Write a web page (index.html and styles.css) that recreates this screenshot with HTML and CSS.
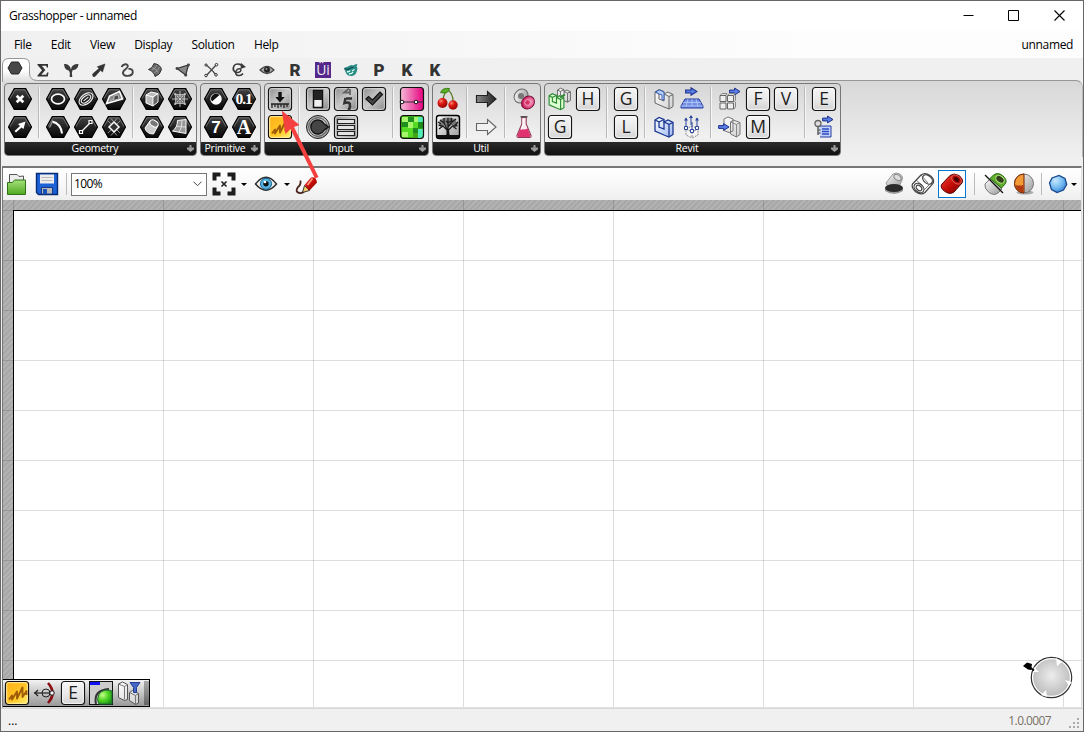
FILE: index.html
```html
<!DOCTYPE html>
<html lang="en">
<head>
<meta charset="utf-8">
<title>Grasshopper - unnamed</title>
<link rel="stylesheet" href="styles.css">
</head>
<body>
<svg class="defs" width="0" height="0">
  <defs>
    <linearGradient id="gDark" x1="0" y1="0" x2="0" y2="1"><stop offset="0" stop-color="#444"/><stop offset=".5" stop-color="#222"/><stop offset="1" stop-color="#080808"/></linearGradient>
    <linearGradient id="gKey" x1="0" y1="0" x2="0" y2="1"><stop offset="0" stop-color="#f6f6f6"/><stop offset=".6" stop-color="#e6e6e6"/><stop offset="1" stop-color="#d2d2d2"/></linearGradient>
    <linearGradient id="gGrey" x1="0" y1="0" x2="1" y2="1"><stop offset="0" stop-color="#8b8b8b"/><stop offset=".5" stop-color="#c9c9c9"/><stop offset="1" stop-color="#858585"/></linearGradient>
    <linearGradient id="gPink" x1="0" y1="0" x2="1" y2="0"><stop offset="0" stop-color="#f5bcd8"/><stop offset="1" stop-color="#e6007e"/></linearGradient>
    <linearGradient id="gYellow" x1="0" y1="0" x2="1" y2="1"><stop offset="0" stop-color="#ffad16"/><stop offset=".6" stop-color="#ffc928"/><stop offset="1" stop-color="#fff37a"/></linearGradient>
    <linearGradient id="gArrow" x1="0" y1="0" x2="1" y2="0"><stop offset="0" stop-color="#8a8a8a"/><stop offset="1" stop-color="#222"/></linearGradient>
    <linearGradient id="gRed" x1="0" y1="0" x2="1" y2="1"><stop offset="0" stop-color="#ef4a3c"/><stop offset=".5" stop-color="#c80d08"/><stop offset="1" stop-color="#6e0000"/></linearGradient>
    <linearGradient id="gSteel" x1="0" y1="0" x2="1" y2="1"><stop offset="0" stop-color="#fff"/><stop offset="1" stop-color="#999"/></linearGradient>
    <linearGradient id="gGreen" x1="0" y1="0" x2="0" y2="1"><stop offset="0" stop-color="#a5e27a"/><stop offset="1" stop-color="#4fa822"/></linearGradient>
    <linearGradient id="gTab" x1="0" y1="0" x2="0" y2="1"><stop offset="0" stop-color="#fff"/><stop offset=".5" stop-color="#fff"/><stop offset="1" stop-color="#dcdcdc"/></linearGradient>
    <linearGradient id="gWall" x1="0" y1="0" x2="1" y2="1"><stop offset="0" stop-color="#fff"/><stop offset="1" stop-color="#cfcfcf"/></linearGradient>
    <linearGradient id="gWallBlue" x1="0" y1="0" x2="1" y2="1"><stop offset="0" stop-color="#fff"/><stop offset="1" stop-color="#9db8f2"/></linearGradient>
    <radialGradient id="gCherry" cx=".35" cy=".3" r=".8"><stop offset="0" stop-color="#ff8a76"/><stop offset=".35" stop-color="#df1b12"/><stop offset="1" stop-color="#8a0000"/></radialGradient>
    <radialGradient id="gRose" cx=".6" cy=".6" r=".6"><stop offset="0" stop-color="#ffb0cf"/><stop offset="1" stop-color="#c81458"/></radialGradient>
    <radialGradient id="gLime" cx=".35" cy=".35" r=".8"><stop offset="0" stop-color="#c4ff8b"/><stop offset=".5" stop-color="#4ed321"/><stop offset="1" stop-color="#128a16"/></radialGradient>
    <radialGradient id="gBlue" cx=".35" cy=".3" r=".8"><stop offset="0" stop-color="#c5e9ff"/><stop offset=".6" stop-color="#6bb3ee"/><stop offset="1" stop-color="#2c72c8"/></radialGradient>
    <radialGradient id="gDial" cx=".5" cy=".45" r=".55"><stop offset="0" stop-color="#ededed"/><stop offset="1" stop-color="#bdbdbd"/></radialGradient>
    <symbol id="hex" viewBox="0 0 28 28"><path d="M2.500 14 8.300 3.600h11.400L25.500 14l-5.800 10.400H8.300z" fill="url(#gDark)" stroke="#000" stroke-width="1.200"/><path d="M4 13.600 9 4.800h10l5 8.800" fill="none" stroke="#8a8a8a" stroke-width=".7"/></symbol>
    <symbol id="key" viewBox="0 0 28 28"><rect x="2.500" y="2.500" width="23" height="23" rx="3" fill="url(#gKey)" stroke="#151515" stroke-width="1.200"/><rect x="3.700" y="3.700" width="20.600" height="20.600" rx="2" fill="none" stroke="#fff" stroke-width=".8"/></symbol>
    <symbol id="greykey" viewBox="0 0 28 28"><rect x="2.500" y="2.500" width="23" height="23" rx="3" fill="url(#gGrey)" stroke="#151515" stroke-width="1.200"/><rect x="3.700" y="3.700" width="20.600" height="20.600" rx="2" fill="none" stroke="#ddd" stroke-width=".8"/></symbol>
    <symbol id="scribble" viewBox="0 0 28 28"><rect x="2.500" y="2.500" width="23" height="23" rx="3" fill="url(#gYellow)" stroke="#111" stroke-width="1.200"/><rect x="3.700" y="3.700" width="20.600" height="20.600" rx="2" fill="none" stroke="#fff3b0" stroke-width=".9"/><path d="M6 20.500 9 16.500v4l5-8v7l5.500-11v9.500l4-6v4" fill="none" stroke="#a05c08" stroke-width="1.900" stroke-linejoin="round"/></symbol>
    <symbol id="barrow" viewBox="0 0 12 8"><path d="M.6 2.600h5V.6L11 4 5.600 7.400v-2h-5z" fill="#5b7fe6" stroke="#1c2f8c" stroke-width="1"/></symbol>
    <symbol id="walls" viewBox="0 0 28 28"><path d="M5 7l4-2.500 5 2V9l4-2 5 2.500v12L19 24l-5-2-9-4z"/><path d="M5 7l4 2v5l5 2V9l5 2.500V24M19 11.500l4-2M9 9l5-2.500" fill="none"/></symbol>
  </defs>
</svg>

<div class="window">
  <header class="titlebar">
    <span class="title">Grasshopper - unnamed</span>
    <div class="winbtns">
      <svg width="11" height="11" viewBox="0 0 11 11"><path d="M.5 5.500h10" stroke="#000"/></svg>
      <svg width="11" height="11" viewBox="0 0 11 11"><path d="M.5.500h10v10H.5z" stroke="#000" fill="none"/></svg>
      <svg width="11" height="11" viewBox="0 0 11 11"><path d="M.5.500l10 10M10.500.500l-10 10" stroke="#000" stroke-width="1.100"/></svg>
    </div>
  </header>
  <nav class="menubar">
    <span>File</span><span>Edit</span><span>View</span><span>Display</span><span>Solution</span><span>Help</span>
    <span class="doc">unnamed</span>
  </nav>

  <div class="tabs">
    <div class="tab active">
      <svg class="tabshape" width="38" height="24" viewBox="0 0 38 24"><path d="M.5 24V7Q.5.500 7 .5h14.500q6 0 6 6V15q0 7.500 8 7.500H38V24z" fill="url(#gTab)"/><path d="M.5 24V7Q.5.500 7 .5h14.500q6 0 6 6V15q0 7.500 8 7.500H38" fill="none" stroke="#969696"/></svg>
      <svg class="tabicon first" width="20" height="20" viewBox="0 0 20 20"><path d="M3 10l3.500-6h7l3.500 6-3.500 6h-7z" fill="#484848" stroke="#222"/></svg>
    </div>
    <svg class="tabicon" viewBox="0 0 20 20"><path d="M4.500 4h10.500v3.500h-1.200l-.6-1.800H8.800l3.500 4.300-4 4.800h5l.8-2.200h1.400L14.800 16.500H4.500v-.9L9 10.300 4.500 5z" fill="#333"/></svg>
    <svg class="tabicon" viewBox="0 0 20 20"><path d="M8.700 17q1-4-.8-6.500Q3.500 10 3 4q5.500-.5 7 5.500Q10.500 3.800 17.500 4q-.5 5.800-6 6.300-1.300 3-.2 6.700z" fill="#3a3a3a"/></svg>
    <svg class="tabicon" viewBox="0 0 20 20"><path d="M4 16.500 3.600 14 10 8.500 8.300 6.700 16 4l-2.500 8-2-1.700L6 16.500z" fill="#333" stroke="#333" stroke-width=".6"/></svg>
    <svg class="tabicon" viewBox="0 0 20 20"><path d="M4.500 7C6 4 11 3 10.800 6.500 10.500 9 5 10 6 13.500c1 3.500 9 3 9.700-.7C16.200 9.500 14 8.500 11.500 9" fill="none" stroke="#444" stroke-width="1.900"/></svg>
    <svg class="tabicon" viewBox="0 0 20 20"><path d="M3.500 9.500q4-1 5.500-6 6.500 1 7.500 6-1.500 5.500-6.500 7-1-5-6.500-7z" fill="#666" stroke="#333"/><path d="M7 7.500q5 1.500 6.500 6M6.500 10.500Q10 9 12 5M9 13q4-2 5.500-6" stroke="#aaa" fill="none" stroke-width=".7"/></svg>
    <svg class="tabicon" viewBox="0 0 20 20"><path d="M4 8.500 15.500 5l-2.800 10z" fill="#888" stroke="#333" stroke-width="1.200"/><circle cx="4" cy="8.500" r="1.400" fill="#444"/><circle cx="15.500" cy="5" r="1.400" fill="#444"/><circle cx="12.700" cy="15" r="1.600" fill="#444"/></svg>
    <svg class="tabicon" viewBox="0 0 20 20"><path d="M5 16 15.500 4.500M4.500 4.500q5 3.500 10.500 10.500" stroke="#444" fill="none" stroke-width="1.300"/><g fill="#eee" stroke="#333"><circle cx="5" cy="15.500" r="1.300"/><circle cx="15.500" cy="4.700" r="1.300"/><circle cx="5" cy="5" r="1.100"/><circle cx="15" cy="14.800" r="1.300"/></g></svg>
    <svg class="tabicon" viewBox="0 0 20 20"><path d="M4.500 10.500Q3.500 4 9 4q3.500 0 5 3" fill="none" stroke="#3a3a3a" stroke-width="1.700"/><path d="M12 3l5 4-5.500 2z" fill="#3a3a3a"/><path d="M4.500 10q1 3 4.500 2.500 4-1 2.500-3.500-3-1-4.500 2-1 4 2 4.500 3.500.5 5-2" fill="none" stroke="#3a3a3a" stroke-width="1.500"/></svg>
    <svg class="tabicon" viewBox="0 0 20 20"><path d="M3 10q7-7.500 14 0-7 7-14 0z" fill="#aaa" stroke="#444" stroke-width="1.200"/><circle cx="10" cy="9.800" r="3" fill="#222"/><circle cx="9.500" cy="9" r="1" fill="#999"/></svg>
    <span class="tabletter">R</span>
    <span class="tabletter ui">Üi</span>
    <svg class="tabicon" viewBox="0 0 20 20"><path d="M3 8l4-1.500 3-1.500 2 .5 3-1.500 1.500.5-1 2 1 1.500Q16 15 11 16q-5 .5-6.500-4z" fill="#2a8c84"/><path d="M3.500 8.500q3 2 6-.5l3-1" stroke="#124f55" stroke-width="1.300" fill="none"/><path d="M6 11.500q2 1 3-1M11 11l2.500-1.500M8 14q3 0 4-2" stroke="#d8fff4" fill="none" stroke-width="1.400"/></svg>
    <span class="tabletter">P</span><span class="tabletter">K</span><span class="tabletter">K</span>
  </div>

  <div class="ribbon">
    <section class="panel">
      <div class="cells">
        <div class="grp c1">
          <svg><use href="#hex"/><path d="M10.700 10.700l6.600 6.600M17.300 10.700l-6.600 6.600" stroke="#fff" stroke-width="2.700"/></svg>
          <svg><use href="#hex"/><path d="M8.500 18 14 13l-2-2 7.500-2.500-2 7.500-2-1.500-5.500 5z" fill="#fff"/></svg>
        </div><i></i>
        <div class="grp c3">
          <svg><use href="#hex"/><ellipse cx="14" cy="14" rx="6.500" ry="4.800" fill="#222" stroke="#fff" stroke-width="1.700"/></svg>
          <svg><use href="#hex"/><g fill="none" stroke="#eee" stroke-width="1.100" transform="rotate(-38 14 14)"><ellipse cx="14" cy="14" rx="8" ry="4.800"/><ellipse cx="14" cy="14" rx="5.500" ry="2.800"/><path d="M11 14h6"/></g></svg>
          <svg><use href="#hex"/><path d="M6.500 18.500 9.500 11l10-4.500 3 7.500z" fill="#888" stroke="#fff" stroke-width="1.500"/><path d="M10 15.500l4-1.200v-3l4-1.500 1 4-5 1.500" fill="#444" stroke="#ddd" stroke-width=".7"/></svg>
          <svg><use href="#hex"/><path d="M8 8.500q9 2 10 12" stroke="#fff" stroke-width="2" fill="none"/><path d="M8.500 8.500l-3 6" stroke="#999" stroke-width="1.200" fill="none"/></svg>
          <svg><use href="#hex"/><path d="M9.500 18.500l9-9" stroke="#fff" stroke-width="1.300"/><path d="M7.500 17.500h3v3h-3zM17 7.500h3v3h-3z" fill="#222" stroke="#fff" stroke-width="1.200"/></svg>
          <svg><use href="#hex"/><path d="M8 8l12 12M20 8 8 20" stroke="#999" fill="none" stroke-width=".9"/><path d="M14 9 9 14l5 5 5-5z" fill="#333" stroke="#fff" stroke-width="1.500"/><path d="M14 9l-3-3.500M14 9l3-3.500M14 19l-3 3.500M14 19l3 3.500" stroke="#bbb" stroke-width=".8"/></svg>
        </div><i></i>
        <div class="grp c2">
          <svg><use href="#hex"/><path d="M8 10l5-3 7 1.500v8.500l-5 4-7-3z" fill="#bbb" stroke="#fff"/><path d="M8 10l7 2 5-3.500M15 12v8.500" stroke="#fff" fill="none"/><path d="M15.500 12.500l4-3V17l-4 3z" fill="#666"/></svg>
          <svg><use href="#hex"/><path d="M14 6v16M6 14h16M9 8.500l10 11M19 8.500l-10 11M8 9q6 1.500 12 0M8 19q6-1.500 12 0M9 8q1.500 6 0 12M19 8q-1.500 6 0 12M11 11h6v6h-6z" stroke="#ddd" fill="none" stroke-width=".8"/></svg>
          <svg><use href="#hex"/><path d="M7 15l5-7 8 4.500-4.500 8.500q-7 0-8.500-6z" fill="#ccc" stroke="#fff"/><ellipse cx="16" cy="10.500" rx="4.500" ry="3" transform="rotate(32 16 10.500)" fill="#777" stroke="#fff"/></svg>
          <svg><use href="#hex"/><path d="M11.500 7.500l8.500-1v14L6.500 18q5-3.500 5-10.500z" fill="#999" stroke="#fff"/><path d="M16 7.500q0 8-3 12M10.500 13.500l9.500.5" stroke="#eee" stroke-width=".8" fill="none"/></svg>
        </div>
      </div>
      <footer><b>Geometry</b><em></em></footer>
    </section>

    <section class="panel">
      <div class="cells"><div class="grp c2">
        <svg><use href="#hex"/><circle cx="14" cy="14" r="5" fill="#fff" stroke="#fff" stroke-width="1.500"/><path d="M10 16.500a5 5 0 0 1 7.500-6.500z" fill="#111"/></svg>
        <svg><use href="#hex"/><text x="13.600" y="19" class="serif small">0.1</text></svg>
        <svg><use href="#hex"/><text x="14" y="20" class="seven">7</text></svg>
        <svg><use href="#hex"/><text x="14" y="20.500" class="serif">A</text></svg>
      </div></div>
      <footer><b>Primitive</b><em></em></footer>
    </section>

    <section class="panel">
      <div class="cells">
        <div class="grp c1">
          <svg><use href="#greykey"/><path d="M12.300 7h3.400v5h3L14 17.500 9.300 12h3z" fill="#111"/><path d="M5 19h18M6 19v4M9 19v3M12 19v4M15 19v3M18 19v4M21 19v3" stroke="#222" stroke-width="1.300"/></svg>
          <svg><use href="#scribble"/></svg>
        </div><i></i>
        <div class="grp c3">
          <svg><use href="#greykey"/><path d="M9.500 5.500h9v17h-9z" fill="#eee" stroke="#111" stroke-width="1.500"/><path d="M10 6h8v9h-8z" fill="#222"/></svg>
          <svg><use href="#greykey"/><path d="M17 3.500l-5 4h7M18 4v6" stroke="#666" stroke-width="1.800" fill="none"/><path d="M20 13.500h-6M13.500 13l-1 5q6-2 5.500 3 0 3-2 4" stroke="#333" stroke-width="2.600" fill="none"/></svg>
          <svg><use href="#greykey"/><path d="M6 14l2.500-2.500 4 3.500L20 7l2.500 2.500-10 10.500z" fill="#454545" stroke="#111" stroke-width="1.200"/></svg>
          <svg><circle cx="14" cy="14" r="11.500" fill="url(#gGrey)" stroke="#222"/><circle cx="14" cy="14" r="9.300" fill="none" stroke="#555"/><path d="M24.500 14l-4.500-3.200A7 7 0 1 0 20 17.200z" fill="#454545" stroke="#111" stroke-width="1.300"/></svg>
          <svg><use href="#greykey"/><path d="M5.500 6.500h17v4h-17zM5.500 12.500h17v4h-17zM5.500 18.500h17v4h-17z" fill="#e4e4e4" stroke="#222" stroke-width="1.200"/></svg>
        </div><i></i>
        <div class="grp c1">
          <svg><rect x="2.500" y="2.500" width="23" height="23" rx="3" fill="url(#gPink)" stroke="#111" stroke-width="1.200"/><path d="M4 17h21" stroke="#333" stroke-width="1.100"/><g fill="#fff" stroke="#111"><circle cx="4" cy="17" r="1.800"/><circle cx="18" cy="17" r="1.800"/></g></svg>
          <svg><rect x="2.500" y="2.500" width="23" height="23" rx="3" fill="#43a51a"/><path d="M4 4h6v5H4zM16 4h4v5h-4zM10 9h5v6h-5zM4 19h6v5H4z" fill="#a7f56b"/><path d="M10 4h6v5h-6zM4 9h6v5H4zM20 9h5v6h-5zM15 15h5v5h-5z" fill="#1d8d1d"/><path d="M15 9h5v6h-5zM10 15h5v9h-5zM4 14h6v5H4z" fill="#56db25"/><path d="M20 4h5v5h-5zM20 16h5v9h-5z" fill="#52ebb3"/><rect x="2.500" y="2.500" width="23" height="23" rx="3" fill="none" stroke="#111" stroke-width="1.200"/></svg>
        </div>
      </div>
      <footer><b>Input</b><em></em></footer>
    </section>

    <section class="panel">
      <div class="cells">
        <div class="grp c1">
          <svg><path d="M9 14Q10 8 14 5q5 4 5 11" stroke="#5a7a24" fill="none" stroke-width="1.300"/><path d="M6.500 7.500q2-5 9-4-1 6-9 4z" fill="#58b223" stroke="#2d6e12" stroke-width=".8"/><circle cx="8.500" cy="18" r="5" fill="url(#gCherry)"/><circle cx="19" cy="20" r="4.700" fill="url(#gCherry)"/></svg>
          <svg><rect x="2.500" y="2.500" width="23" height="23" rx="2.500" fill="url(#gSteel)" stroke="#000" stroke-width="1.400"/><path d="M3 22h22v3H3z" fill="#111"/><path d="M11.500 24q1.500-3 1-8h2.500q0 5 1.500 8z" fill="#111"/><path d="M5 9q2-5 9-4.500Q21 4 23 10l-1 4-5-2-3 3-3-3-5 2z" fill="#333" fill-opacity=".55"/><path d="M13 17l-4-4-4.500-1M13 16l-3-6-4-3M14 16V5M14 14l4-5 4-3M14.500 17l4-4 5-.5M9 13l-4 3M18.500 13l4 3M10 10V5M18 9l-1-4M7 11l-3-2M21 12.500l3-3.500M12 8l2 2 3-2" stroke="#1c1c1c" stroke-width="1.300" fill="none"/></svg>
        </div><i></i>
        <div class="grp c1">
          <svg><path d="M4.500 10.500h11V6.500L24 14l-8.500 7.500v-4h-11z" fill="url(#gArrow)" stroke="#222" stroke-width="1.200"/></svg>
          <svg><path d="M4.500 10.500h11V6.500L24 14l-8.500 7.500v-4h-11z" fill="#f2f2f2" stroke="#666" stroke-width="1.100"/></svg>
        </div><i></i>
        <div class="grp c1">
          <svg><ellipse cx="11" cy="11" rx="7.500" ry="6.300" transform="rotate(-45 11 11)" fill="url(#gSteel)" stroke="#666"/><circle cx="11" cy="11" r="3" fill="#777"/><ellipse cx="18" cy="17.500" rx="7" ry="6" transform="rotate(-45 18 17.500)" fill="url(#gRose)" stroke="#7a1038"/><circle cx="17.500" cy="17.500" r="2.800" fill="#d43368" stroke="#f79abd"/></svg>
          <svg><path d="M11.800 4.500h4.400v6.500L21 22.500q.5 2-1.500 2H8.500q-2 0-1.500-2L11.800 11z" fill="#fbeaf0" stroke="#8d3a58" stroke-width="1.100"/><path d="M10.300 15.500q3.700 2 7.300 0l2.900 7.500-1 1H8.500l-1-1z" fill="#e0326f"/><path d="M10.500 3.800h7" stroke="#555" stroke-width="1.500"/><path d="M13 6v6l-2 5" stroke="#fff" fill="none"/></svg>
        </div>
      </div>
      <footer><b>Util</b><em></em></footer>
    </section>

    <section class="panel">
      <div class="cells">
        <div class="grp c2">
          <svg><use href="#walls" x="8" y="0" width="20" height="20" fill="url(#gWall)" stroke="#555" stroke-width="1.200"/><use href="#walls" x="-1" y="5" width="23" height="23" fill="#dcffd2" stroke="#2c8a33" stroke-width="1.400"/><path d="M14 12.500l5-3" stroke="#2b8c34" stroke-width="2"/></svg>
          <svg><use href="#key"/><text x="14" y="20">H</text></svg>
          <svg><use href="#key"/><text x="14" y="20">G</text></svg>
        </div><i></i>
        <div class="grp c1">
          <svg><use href="#key"/><text x="14" y="20">G</text></svg>
          <svg><use href="#key"/><text x="14" y="20">L</text></svg>
        </div><i></i>
        <div class="grp c2">
          <svg><use href="#walls" fill="url(#gWall)" stroke="#666"/><path d="M5.500 7 9.500 5l4.500 2v8l-2-.5V10L9 9z" fill="#b5cdf7" stroke="#3c62b8"/></svg>
          <svg><use href="#barrow" x="7" y="2" width="13" height="9"/><path d="M7 14h14l4 7v2H3v-2z" fill="#7290e2" stroke="#2338a0"/><path d="M5 17.500h18M3 21h22M10 14l-2 7M14 14v7M18 14l2 7" stroke="#c4d2ff" stroke-width=".7"/></svg>
          <svg><use href="#walls" fill="url(#gWallBlue)" stroke="#1b3690" stroke-width="1.300"/></svg>
          <svg><path d="M8 16l6-3 6 3v6l-6 3-6-3zM8 16l6 3 6-3M14 19v5" fill="#f4f4f4" stroke="#888" stroke-dasharray="2 1"/><path d="M8 5v10M13 3v9M19 5v9M14 9v9" stroke="#29449e"/><path d="M6 7.500l2-3 2 3zM11 5l2-3 2 3zM17 7.500l2-3 2 3z" fill="#29449e"/><path d="M6.500 13.500h3v3h-3zM17.500 13.500h3v3h-3zM12.500 16.500h3v3h-3z" fill="#fff" stroke="#29449e"/></svg>
        </div><i></i>
        <div class="grp c3">
          <svg><use href="#barrow" x="13" y="2" width="12" height="9"/><path d="M4 10.500h6v6H4zM11.500 10.500h6v6h-6zM4 18h6v6H4zM11.500 18h6v6h-6z" fill="#eee" stroke="#666"/><path d="M4.500 10l1.500-1.500h5L10 10M12 10l1.500-1.500h5.500l-1.500 2M18 17l1.500-1.500v-5.500M18 24l1.500-2v-5" fill="none" stroke="#888"/></svg>
          <svg><use href="#key"/><text x="14" y="20">F</text></svg>
          <svg><use href="#key"/><text x="14" y="20">V</text></svg>
          <svg><path d="M8 6l4-2 5 2v12l-4 1.500-5-2zM14.500 9l3-2 6.500 2.500v12L20.500 24l-6-3z" fill="url(#gWall)" stroke="#777"/><path d="M14.500 9l6 2.500V24M20.500 11.500l3.500-2" fill="none" stroke="#888"/><use href="#barrow" x="2" y="9.500" width="12" height="9"/></svg>
          <svg><use href="#key"/><text x="14" y="20">M</text></svg>
        </div><i></i>
        <div class="grp c1">
          <svg><use href="#key"/><text x="14" y="20">E</text></svg>
          <svg><use href="#barrow" x="12" y="2" width="12" height="9"/><path d="M9 13h12v11H10" fill="#c3d1ff" stroke="#223c9e"/><path d="M12 16h7M12 18.500h7M12 21h7" stroke="#2c4cc0" stroke-width="1.300"/><circle cx="8" cy="10.500" r="3" fill="#ddd" stroke="#666" stroke-width="1.300"/><path d="M8 13.500V22M8 17h2.500M8 20h2.500" stroke="#666" stroke-width="1.600"/></svg>
        </div>
      </div>
      <footer><b>Revit</b><em></em></footer>
    </section>
  </div>

  <main class="editor">
    <div class="toolbar">
      <svg class="t-open" width="22" height="24" viewBox="0 0 22 24"><path d="M3.500 12V2.500H11l2 2 4.500-.5V12z" fill="#eee" stroke="#555"/><path d="M1.500 22.500V10.500h5l2-2.500H19.500v14.500z" fill="url(#gGreen)" stroke="#2f7018"/></svg>
      <svg class="t-save" width="24" height="24" viewBox="0 0 24 24"><path d="M1.500 1.500h21v21h-19l-2-2z" fill="#1c62d6" stroke="#092b74" stroke-width="1.400"/><path d="M5 2.500h14v9H5z" fill="#ededed"/><path d="M6.500 5.500h11M6.500 8.500h11" stroke="#bbb"/><path d="M6.500 15.500h11V22h-11z" fill="#bbb" stroke="#163a80"/><path d="M8 17h4v5H8z" fill="#1953b8"/></svg>
      <i class="vs"></i>
      <div class="combo"><span>100%</span><svg width="9" height="6" viewBox="0 0 9 6"><path d="M.5.700l4 4 4-4" fill="none" stroke="#444"/></svg></div>
      <svg class="t-zoom" width="24" height="24" viewBox="0 0 24 24"><path d="M2.500 8.500v-6h6M15.500 2.500h6v6M21.500 15.500v6h-6M8.500 21.500h-6v-6" fill="none" stroke="#1d1d1d" stroke-width="4"/><path d="M9.500 9.500l5 5M14.500 9.500l-5 5" stroke="#222" stroke-width="1.700"/></svg>
      <span class="drop"></span>
      <svg class="t-eye" width="24" height="20" viewBox="0 0 24 20"><path d="M1.500 10Q12-3.500 22.500 10 12 22.500 1.500 10z" fill="#eee" stroke="#2d2d2d" stroke-width="1.500"/><circle cx="12" cy="9.800" r="5.500" fill="#55b5e5" stroke="#13618e"/><circle cx="12" cy="9.800" r="2.700" fill="#111"/><circle cx="11" cy="8" r="1.300" fill="#fff"/></svg>
      <span class="drop"></span>
      <svg class="t-pen" width="26" height="24" viewBox="0 0 26 24"><path d="M5.500 8.500Q6 13 3 15q-3.500 5 1.500 6Q8 21.500 10 18" fill="none" stroke="#4b241d" stroke-width="1.800"/><path d="M7.500 20.500l2-7 5 5z" fill="#f4cc69" stroke="#222" stroke-width=".9"/><path d="M9.500 13l6.500-7.500q5-1.500 6 5L14.500 18.500z" fill="url(#gRed)"/><path d="M12.500 13l5-6.500" stroke="#ff9a87" stroke-width="1.700"/></svg>
      <span class="grow"></span>
      <svg class="t-r" width="24" height="24" viewBox="0 0 24 24"><path d="M4 11l7-9q3-2 7 0 4 3 2 6l-3 7H6z" fill="url(#gSteel)" stroke="#999"/><ellipse cx="15.500" cy="5.500" rx="4" ry="2.500" transform="rotate(35 15.500 5.500)" fill="#ddd" stroke="#888"/><path d="M3 16q9 6 18 0v3q-9 6-18 0z" fill="#999"/><ellipse cx="12" cy="16" rx="9" ry="4" fill="#2b2b2b"/></svg>
      <svg class="t-r2" width="24" height="24" viewBox="0 0 24 24"><g fill="#fff" stroke="#444" stroke-width="1.200"><path d="M1.500 12 10 3q4-3 9 .5 5 4 3 8L14 20.500q-4 3-9-.5-5-4-3.500-8z"/><ellipse cx="16.500" cy="7.500" rx="5.500" ry="3.800" transform="rotate(40 16.500 7.500)"/><ellipse cx="8" cy="16" rx="5.500" ry="4" transform="rotate(40 8 16)"/><ellipse cx="8" cy="16" rx="3.300" ry="2.200" transform="rotate(40 8 16)"/></g><path d="M10 3l7 8M5 8l6 5M13 18l8-8" stroke="#555" fill="none" stroke-width=".8"/></svg>
      <span class="selected"><svg width="24" height="24" viewBox="0 0 24 24"><path d="M1.500 12.500 10 3.500q4-3 9 0 5 4 3 7.500L14 20q-4 3-9-.5-5-3.500-3.500-7z" fill="url(#gRed)" stroke="#5a0000"/><ellipse cx="16.500" cy="7.500" rx="5.500" ry="3.800" transform="rotate(40 16.500 7.500)" fill="#b60d08" stroke="#ed8277" stroke-width=".7"/><ellipse cx="16.500" cy="7.500" rx="3" ry="2" transform="rotate(40 16.500 7.500)" fill="#450000"/></svg></span>
      <i class="vs v2"></i>
      <svg class="t-half" width="24" height="24" viewBox="0 0 24 24"><path d="M2 12 8 6l11 11-4 4q-4 3-9-.5-5-4-4-8.500z" fill="url(#gSteel)" stroke="#777"/><path d="M7 6.500 10.500 3q4-3 9 .5 5 4 3 8L18.500 16z" fill="#5fae2a" stroke="#2a6813"/><ellipse cx="17" cy="7.300" rx="4.700" ry="3.200" transform="rotate(38 17 7.300)" fill="#32401c" stroke="#b7e885"/><path d="M2 3l18 18" stroke="#111" stroke-width="1.300"/></svg>
      <svg class="t-ball" width="22" height="22" viewBox="0 0 22 22"><ellipse cx="12" cy="19.500" rx="8.500" ry="2" fill="#aaa"/><circle cx="11" cy="10.500" r="9.500" fill="url(#gSteel)" stroke="#777"/><path d="M11 1a9.500 9.500 0 0 0 0 19z" fill="#f29a36" stroke="#712000"/><path d="M2 12q4 1 8.500 0v7.500Q4 19 2 12z" fill="#b23c10"/></svg>
      <i class="vs v3"></i>
      <svg class="t-gem" width="20" height="20" viewBox="0 0 20 20"><path d="M1.500 9 4 4l7-2.500 6 3 1.700 6L15.500 16l-6.500 2.500-5.500-3z" fill="url(#gBlue)" stroke="#19498f" stroke-width="1.300"/></svg>
      <span class="drop d3"></span>
    </div>

    <div class="canvas">
      <div class="margin"></div>
      <div class="sheet"></div>
      <div class="quick">
        <svg><use href="#scribble"/></svg>
        <svg><path d="M17 4q9 10 0 20" fill="none" stroke="#8a0d12" stroke-width="2.600"/><circle cx="15" cy="14" r="4" fill="none" stroke="#222"/><path d="M3 14h16" stroke="#222" stroke-width="1.200"/><path d="M7 11l-3 3 3 3" fill="none" stroke="#222" stroke-width="1.300"/><circle cx="21" cy="14" r="2.200" fill="#fff" stroke="#111"/></svg>
        <svg><use href="#key"/><text x="14" y="20">E</text></svg>
        <svg><rect x="2.500" y="2.500" width="23" height="23" fill="#ccc" stroke="#111"/><path d="M3 3h10v3H3z" fill="#1010f5"/><path d="M9 25q-3-14 13-15" fill="none" stroke="#333" stroke-width="2"/><path d="M25 12v13H12q-3-4 0-10 5-6 13-3z" fill="url(#gLime)" stroke="#286a3b"/></svg>
        <svg><path d="M3.500 5l4-2 5 2.500v15l-3 1-6-3zM14.500 13.500l3-2 6 3V24l-3 1.500-6-4z" fill="url(#gWall)" stroke="#555"/><path d="M3.500 5l6 2.500v13M9.500 7.500l3-2M14.500 13.500l6 3V25M20.500 16.500l3-2" fill="none" stroke="#777"/><path d="M15 3.500h10l-3.500 5v5h-3v-5z" fill="#4267c7" stroke="#243d91"/></svg>
        <b></b>
      </div>
      <svg class="compass" width="56" height="50" viewBox="0 0 56 50"><circle cx="31.500" cy="25.500" r="20.200" fill="#fff" stroke="#333" stroke-width="1.200"/><circle cx="31.500" cy="25.500" r="18.300" fill="url(#gDial)"/><path d="M36 6l6 4-5 4zM52 30l-7-2 4 6zM21 43l5-5 1 7zM13 20l6 0-5-5z" fill="#fff"/><path d="M3 14l4-3.500 5 1.500-1 6-3-.5z" fill="#000"/><path d="M8 14l6 4.500" stroke="#000" stroke-width="1.700"/></svg>
    </div>
  </main>

  <footer class="status"><span>...</span><span class="ver">1.0.0007</span>
    <svg width="11" height="11" viewBox="0 0 11 11"><path d="M8 0h2v2H8zM4 4h2v2H4zM8 4h2v2H8zM0 8h2v2H0zM4 8h2v2H4zM8 8h2v2H8z" fill="#aaa"/></svg>
  </footer>

  <svg class="pointer" width="50" height="80" viewBox="0 0 50 80"><path d="M11.700 7.500 29.500 22 24 24 48.500 74 45 75.500 20.500 26 15.500 31z" fill="#f4403f"/></svg>
</div>
</body>
</html>
```
FILE: styles.css
```css
* { box-sizing: border-box; }
body { margin: 0; font-family: "Open Sans", "Noto Sans", sans-serif; font-size: 12px; color: #000; }
.defs { position: absolute; }
svg { display: block; flex: none; }

.window {
  position: relative;
  width: 1084px;
  height: 732px;
  border: 1px solid #676767;
  background: #f0f0f0;
  display: flex;
  flex-direction: column;
  overflow: hidden;
}

.titlebar { height: 30px; flex: none; background: #fff; display: flex; justify-content: space-between; padding: 0 18px 0 8px; line-height: 29px; }
.title { letter-spacing: -.42px; }
.winbtns { display: flex; gap: 35px; padding-top: 9px; }
.winbtns svg:first-child { margin-right: -1px; }

.menubar { height: 27px; flex: none; display: flex; gap: 19.3px; padding: 0 10px 0 13px; line-height: 28px; background: linear-gradient(90deg, #f0f0f0, #fdfdfd 75%); letter-spacing: -.36px; }
.menubar .doc { margin-left: auto; }

.tabs { height: 22px; flex: none; display: flex; align-items: flex-start; padding-left: 1px; }
.tab.active { position: relative; width: 26px; height: 22px; margin-right: 1px; }
.tabshape { position: absolute; left: 0; top: 0; z-index: 1; }
.tabicon { width: 20px; height: 20px; margin: 2px 4px 0; }
.tabicon.first { position: relative; z-index: 2; margin: 0 0 0 3px; }
.tabletter { width: 28px; text-align: center; font: 900 17px/24px Roboto, "Open Sans", sans-serif; color: #333; }
.tabletter.ui { width: 16px; height: 16px; margin: 4px 6px 0; background: #55278c; color: #eee; font: 400 14px/16px "Open Sans", sans-serif; }

.ribbon {
  height: 77px;
  flex: none;
  margin: 0 0 0 1px;
  padding: 2px 2px 0;
  display: flex;
  gap: 3px;
  border-top: 1px solid #969696;
  border-right: 1px solid #bbb;
  border-radius: 0 7px 0 0;
  background: linear-gradient(#d8d8d8, #f0f0f0);
}
.panel { height: 73px; border: 1px solid #777; border-radius: 4px; overflow: hidden; background: linear-gradient(#d6d6d6, #f1f1f1 75%, #e4e4e4); }
.cells { display: flex; height: 58px; padding: 1px 2px 0 1px; }
.cells > i { width: 10px; height: 51px; margin-top: 2px; background: linear-gradient(90deg, transparent 4px, #b9b9b9 4px, #b9b9b9 5px, #f7f7f7 5px, #f7f7f7 6px, transparent 6px); }
.grp { display: grid; grid-auto-rows: 28px; }
.c1 { grid-template-columns: 28px; }
.c2 { grid-template-columns: repeat(2, 28px); }
.c3 { grid-template-columns: repeat(3, 28px); }
.grp svg, .quick svg { width: 28px; height: 28px; }
svg text { font-family: "Open Sans", sans-serif; font-size: 17.5px; text-anchor: middle; fill: #1c1c1c; }
svg text.serif { font-family: "Liberation Serif", serif; font-size: 20px; font-weight: 700; fill: #fff; }
svg text.serif.small { font-size: 15.5px; letter-spacing: -1px; }
svg text.seven { font-family: "Liberation Sans", sans-serif; font-weight: 700; font-size: 17px; fill: #fff; }
.panel footer { position: relative; height: 13px; background: linear-gradient(#2b2b2b, #101010); color: #fff; text-align: center; font-size: 10.5px; letter-spacing: -.25px; line-height: 12px; padding-right: 11px; }
.panel footer b { font-weight: 400; }
.panel footer em { position: absolute; right: 2px; top: 3px; width: 7px; height: 7px; clip-path: polygon(35% 0, 65% 0, 65% 35%, 100% 35%, 100% 60%, 50% 100%, 0 60%, 0 35%, 35% 35%); background: #999; }

.editor { margin: 9px 1px 0; height: 542px; flex: none; border-top: 2px solid #777; border-left: 1px solid #777; border-right: 1px solid #ddd; border-bottom: 1px solid #e0e0e0; display: flex; flex-direction: column; }
.toolbar { height: 32px; flex: none; display: flex; align-items: center; background: linear-gradient(#fff, #f8f8f8 50%, #eee); }
.vs { width: 1px; height: 22px; background: #bbb; }
.t-open { margin-left: 3px; }
.t-save { margin-left: 7px; }
.t-save + .vs { margin-left: 7px; }
.combo { width: 136px; height: 23px; margin-left: 4px; border: 1px solid #777; background: #fff; display: flex; align-items: center; justify-content: space-between; padding: 0 4px 1px 2px; letter-spacing: -.65px; }
.t-zoom { margin-left: 5px; }
.drop { margin-left: 5px; border: solid transparent; border-width: 3px 3px 0; border-top-color: #000; }
.t-eye { margin-left: 7px; }
.t-eye + .drop { margin-left: 6px; }
.t-pen { margin-left: 5px; }
.grow { flex: 1; }
.t-r2 { margin-left: 5px; }
.selected { width: 28px; height: 28px; margin-left: 3px; border: 1px solid #0078d7; background: #fff; padding: 1px; }
.v2 { margin-left: 8px; }
.t-half { margin-left: 8px; }
.t-ball { margin-left: 6px; }
.v3 { margin-left: 6px; }
.t-gem { margin-left: 6px; }
.d3 { margin: 0 4px 0 3px; }

.canvas { position: relative; flex: 1; background: #fff; }
.margin { position: absolute; inset: 0; background: repeating-linear-gradient(135deg, #a8a8a8 0 2px, #b2b2b2 2px 4px); }
.sheet { position: absolute; left: 10px; top: 10px; right: 0; bottom: 0; background: #fff; border-left: 1px solid #000; border-top: 1px solid #000; }
.canvas::after { content: ""; position: absolute; inset: 0; background: linear-gradient(90deg, #0002 1px, transparent 1px) 10px 10px / 150px 50px, linear-gradient(#0002 1px, transparent 1px) 10px 10px / 150px 50px; pointer-events: none; }
.quick { position: absolute; z-index: 2; left: 0; bottom: 0; width: 147px; height: 28px; display: flex; align-items: center; border: 1px solid #000; border-left: 0; background: linear-gradient(#f2f2f2, #999); overflow: hidden; }
.quick b { flex: 1; margin-left: 1px; height: 24px; background: linear-gradient(#aaa, #666); }
.compass { position: absolute; z-index: 2; right: 5px; bottom: 5px; }

.status { height: 23px; flex: none; display: flex; align-items: flex-start; padding: 0 3px 0 7px; line-height: 23px; border-top: 1px solid #d7d7d7; }
.status .ver { margin-left: auto; margin-right: 18px; color: #777067; letter-spacing: -.6px; }
.status svg { margin-top: 9px; }

.pointer { position: absolute; z-index: 5; left: 269px; top: 102px; }
```
